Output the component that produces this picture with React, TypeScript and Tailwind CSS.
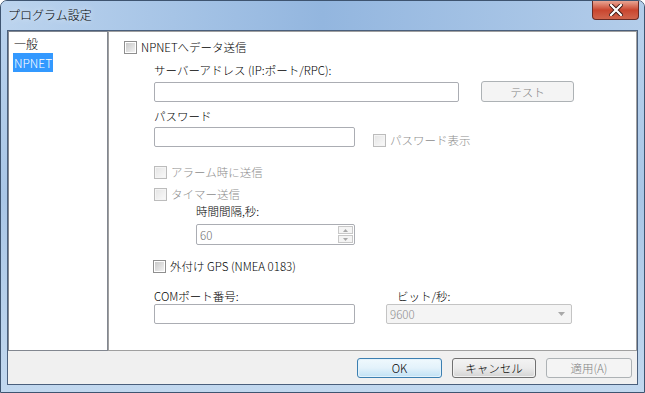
import { ReactNode } from 'react'

const font = { fontFamily: '"Noto Sans CJK JP", "Liberation Sans", sans-serif' }

function CheckBox({ label, disabled }: { label: string; disabled?: boolean }) {
  return (
    <div className="flex items-center h-[16px]">
      <span
        className={`w-[13px] h-[13px] border flex items-center justify-center ${
          disabled ? 'border-[#bcbcbc] bg-[#f4f4f4]' : 'border-[#8f8f8f] bg-white'
        }`}
      >
        <span
          className={`w-[9px] h-[9px] ${
            disabled ? 'bg-gradient-to-br from-[#e6e6e6] to-[#f8f8f8]' : 'bg-gradient-to-br from-[#c9c9c9] to-[#f2f2f2]'
          }`}
        />
      </span>
      <span className={`ml-[4px] text-[11.5px] leading-[16px] ${disabled ? 'text-[#8d8d8d]' : 'text-black'}`}>{label}</span>
    </div>
  )
}

function TextBox({ width, children }: { width: string; children?: ReactNode }) {
  return (
    <div className={`${width} h-[20px] border border-[#abadb3] rounded-[2px] bg-white flex items-center`}>
      {children}
    </div>
  )
}

function WinButton({ label, kind, width }: { label: string; kind?: 'default' | 'disabled'; width: string }) {
  if (kind === 'disabled') {
    return (
      <div className={`${width} h-[20px] border border-[#adb2b5] rounded-[3px] bg-[#f4f4f4] flex items-center justify-center text-[11.5px] leading-[16px] text-[#838383]`}>
        {label}
      </div>
    )
  }
  if (kind === 'default') {
    return (
      <div className={`${width} h-[20px] border border-[#3c7fb1] rounded-[3px] p-[1px] bg-[#e3f2fb]`}>
        <div className="w-full h-full rounded-[2px] bg-gradient-to-b from-[#eef8fd] via-[#e3f2fb] to-[#c4e3f5] flex items-center justify-center text-[11.5px] leading-[16px] text-black">
          {label}
        </div>
      </div>
    )
  }
  return (
    <div className={`${width} h-[20px] border border-[#707070] rounded-[3px] p-[1px] bg-[#f2f2f2]`}>
      <div className="w-full h-full rounded-[2px] bg-gradient-to-b from-[#f2f2f2] via-[#ebebeb] to-[#d6d6d6] flex items-center justify-center text-[11.5px] leading-[16px] text-black">
        {label}
      </div>
    </div>
  )
}

export default function App() {
  return (
    <div className="w-[645px] h-[393px] bg-white font-light" style={font}>
      <div className="w-full h-full rounded-t-[7px] border border-[#3e5470] bg-gradient-to-b from-[#bad3ee] via-[#a9c6e6] to-[#c2d8ef] flex flex-col overflow-hidden">
        {/* Title bar */}
        <div className="h-[29px] flex items-start justify-between bg-gradient-to-r from-[#bcd4ee] via-[#93b6df] to-[#b3cdea]">
          <div className="pl-[7px] pt-[6px] text-[12px] leading-[16px] text-black [text-shadow:0_0_6px_#ffffff]">
            プログラム設定
          </div>
          <div className="mr-[5px] w-[47px] h-[19px] rounded-b-[4px] border border-t-0 border-[#6a2b25] bg-gradient-to-b from-[#e8a493] via-[#c9452f] to-[#d0654d] flex items-center justify-center">
            <svg width="14" height="12" viewBox="0 0 14 12">
              <path d="M2 1 L12 11 M12 1 L2 11" stroke="#3b1510" strokeWidth="4" strokeLinecap="square" />
              <path d="M2 1 L12 11 M12 1 L2 11" stroke="#ffffff" strokeWidth="2.2" strokeLinecap="square" />
            </svg>
          </div>
        </div>

        {/* Client area */}
        <div className="flex-1 flex px-[6px] pb-[7px]">
          <div className="flex-1 border border-[#4a5f7c] bg-[#f0f0f0] flex flex-col">
            <div className="h-[320px] flex">
              {/* Tree */}
              <div className="w-[100px] border border-[#828790] bg-white pt-[3px] pl-[4px] text-[12px] leading-[16px]">
                <div className="pl-[1px] h-[18px] flex items-center">一般</div>
                <div className="inline-flex h-[19px] items-center px-[1px] bg-[#3399ff] text-white">NPNET</div>
              </div>

              {/* Content */}
              <div className="flex-1 border border-[#a0a0a0] bg-white text-[11.5px] leading-[16px] text-black">
                <div className="pl-[15px] pt-[7px]">
                  <CheckBox label="NPNETへデータ送信" />
                </div>
                <div className="pl-[45px]">
                  <div className="mt-[7px] h-[16px]">サーバーアドレス (IP:ポート/RPC):</div>
                  <div className="mt-[3px] flex items-center">
                    <TextBox width="w-[305px]" />
                    <div className="ml-[22px] w-[93px] h-[21px] border border-[#adb2b5] rounded-[3px] bg-[#f4f4f4] flex items-center justify-center text-[#838383]">
                      テスト
                    </div>
                  </div>
                  <div className="mt-[6px] h-[16px]">パスワード</div>
                  <div className="mt-[3px] flex items-end">
                    <TextBox width="w-[201px]" />
                    <div className="ml-[18px] mb-[-1px]">
                      <CheckBox label="パスワード表示" disabled />
                    </div>
                  </div>
                  <div className="mt-[17px]">
                    <CheckBox label="アラーム時に送信" disabled />
                  </div>
                  <div className="mt-[6px]">
                    <CheckBox label="タイマー送信" disabled />
                  </div>
                  <div className="pl-[42px]">
                    <div className="mt-[1px] h-[16px]">時間間隔,秒:</div>
                    <div className="mt-[5px] w-[159px] h-[21px] border border-[#abadb3] rounded-[2px] bg-white flex items-center">
                      <span className="pl-[3px] flex-1 text-[#6d6d6d]">60</span>
                      <div className="mr-[1px] flex flex-col gap-[1px]">
                        <div className="w-[15px] h-[8px] border border-[#c8c8c8] bg-[#f4f4f4] flex items-center justify-center">
                          <svg width="5" height="3" viewBox="0 0 5 3"><path d="M0 3 L2.5 0 L5 3Z" fill="#a8a8a8" /></svg>
                        </div>
                        <div className="w-[15px] h-[8px] border border-[#c8c8c8] bg-[#f4f4f4] flex items-center justify-center">
                          <svg width="5" height="3" viewBox="0 0 5 3"><path d="M0 0 L2.5 3 L5 0Z" fill="#a8a8a8" /></svg>
                        </div>
                      </div>
                    </div>
                  </div>
                  <div className="mt-[13px] ml-[-1px]">
                    <CheckBox label="外付け GPS (NMEA 0183)" />
                  </div>
                  <div className="mt-[14px] flex">
                    <div className="w-[232px]">
                      <div className="h-[16px]">COMポート番号:</div>
                      <div className="mt-[0px]">
                        <TextBox width="w-[201px]" />
                      </div>
                    </div>
                    <div>
                      <div className="h-[16px] pl-[11px]">ビット/秒:</div>
                      <div className="mt-[0px] w-[186px] h-[20px] border border-[#c4c4c4] rounded-[2px] bg-[#f4f4f4] flex items-center">
                        <span className="pl-[3px] flex-1 text-[#8d8d8d]">9600</span>
                        <svg className="mr-[6px]" width="7" height="4" viewBox="0 0 7 4"><path d="M0 0 L3.5 4 L7 0Z" fill="#a8a8a8" /></svg>
                      </div>
                    </div>
                  </div>
                </div>
              </div>
            </div>

            {/* Buttons */}
            <div className="flex-1 flex items-start justify-end gap-[10px] pt-[7px] pr-[5px]">
              <WinButton label="OK" kind="default" width="w-[85px]" />
              <WinButton label="キャンセル" width="w-[84px]" />
              <WinButton label="適用(A)" kind="disabled" width="w-[86px]" />
            </div>
          </div>
        </div>
      </div>
    </div>
  )
}
